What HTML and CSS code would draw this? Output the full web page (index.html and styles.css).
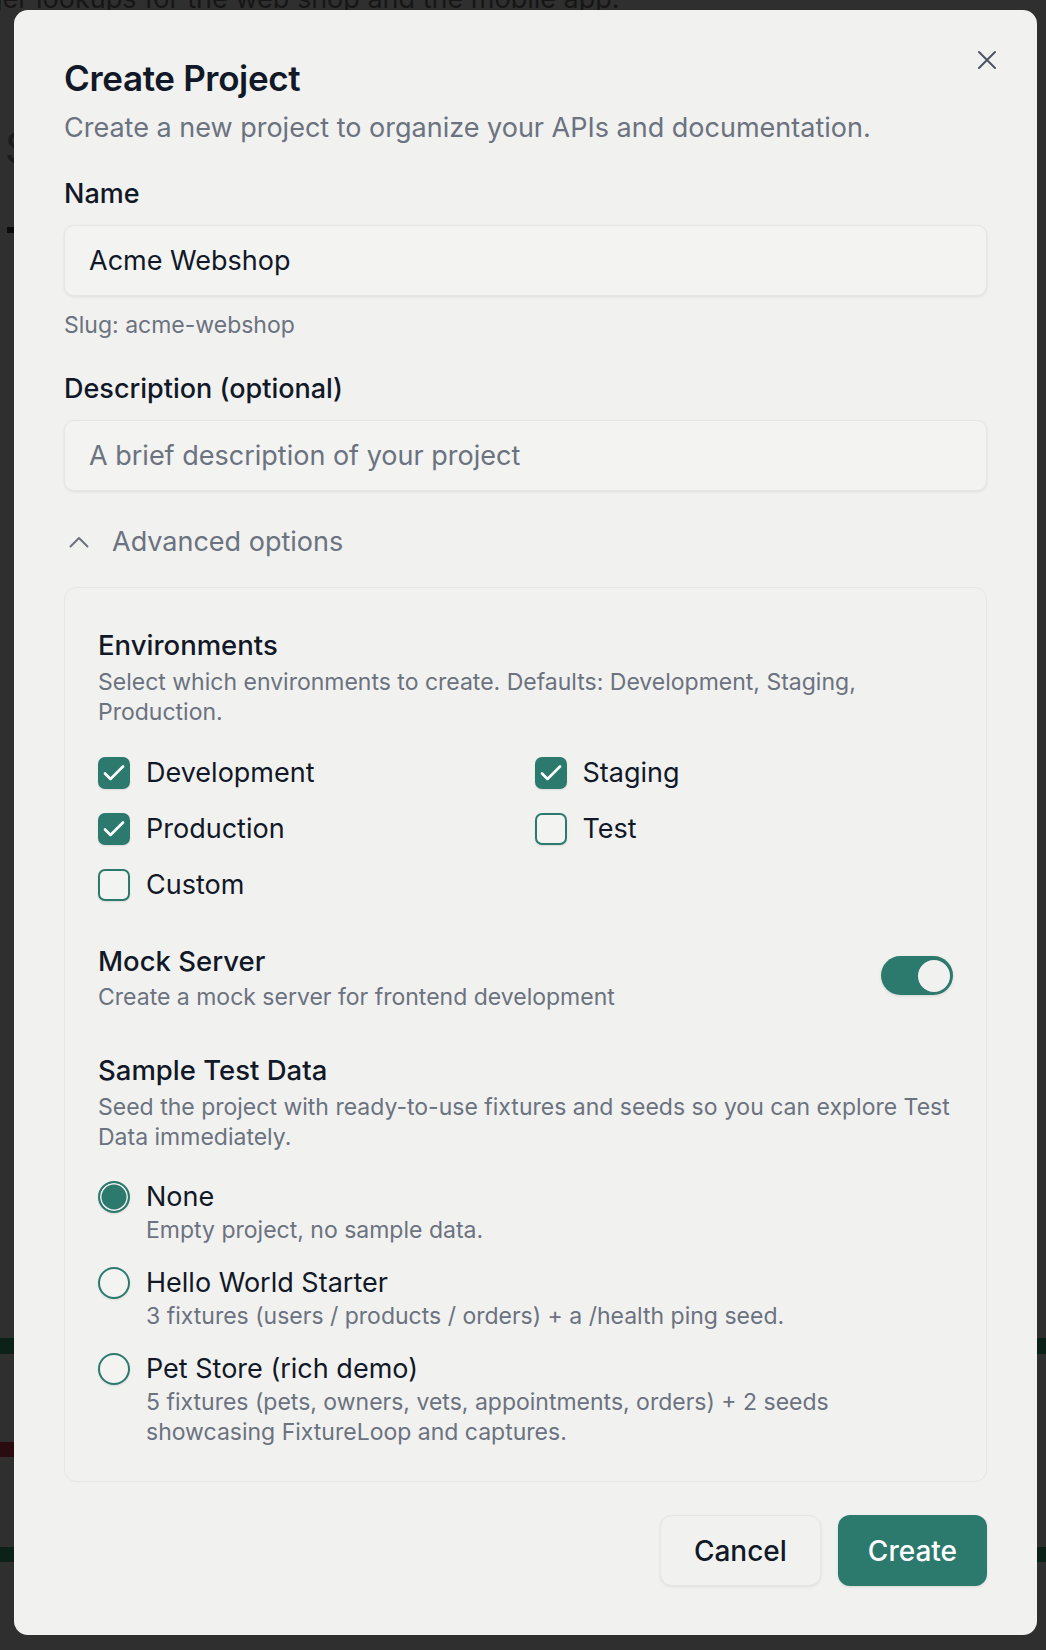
FILE: index.html
```html
<!DOCTYPE html>
<html lang="en">
<head>
    <meta charset="UTF-8">
    <meta name="viewport" content="width=device-width, initial-scale=1.0">
    <title>Create Project</title>
    <link rel="stylesheet" href="styles.css">
</head>
<body>

    <!-- page behind the dialog -->
    <div class="page">
        <p class="page-intro">ger lookups for the web shop and the mobile app.</p>
        <p class="page-heading">S</p>
        <span class="page-bullet"></span>
        <div class="page-band band-green"></div>
        <div class="page-band band-red"></div>
        <div class="page-band band-green band-last"></div>
    </div>

    <div class="dialog" role="dialog" aria-labelledby="dialogTitle">
        <button class="dialog-close" aria-label="Close">
            <svg width="20" height="20" viewBox="0 0 20 20" fill="none" stroke="currentColor" stroke-width="2" stroke-linecap="round">
                <path d="M2 2 18 18M18 2 2 18"/>
            </svg>
        </button>

        <h2 id="dialogTitle" class="dialog-title">Create Project</h2>
        <p class="dialog-desc">Create a new project to organize your APIs and documentation.</p>

        <div class="field">
            <label for="projectName">Name</label>
            <input type="text" id="projectName" value="Acme Webshop">
            <p class="hint">Slug: acme-webshop</p>
        </div>

        <div class="field field-desc">
            <label for="projectDesc">Description (optional)</label>
            <input type="text" id="projectDesc" placeholder="A brief description of your project">
        </div>

        <button class="advanced-toggle">
            <svg width="20" height="12" viewBox="0 0 20 12" fill="none" stroke="currentColor" stroke-width="2" stroke-linecap="round" stroke-linejoin="round">
                <polyline points="1.5,10.5 10,2 18.5,10.5"/>
            </svg>
            Advanced options
        </button>

        <div class="advanced">
            <section class="adv-section">
                <h3>Environments</h3>
                <p class="adv-desc">Select which environments to create. Defaults: Development, Staging, Production.</p>
                <div class="env-grid">
                    <label class="option"><span class="check checked"><svg width="32" height="32" viewBox="0 0 32 32" fill="none" stroke="#fff" stroke-width="2.6" stroke-linecap="round" stroke-linejoin="round"><polyline points="7,16.5 12.5,22 25,9.5"/></svg></span>Development</label>
                    <label class="option"><span class="check checked"><svg width="32" height="32" viewBox="0 0 32 32" fill="none" stroke="#fff" stroke-width="2.6" stroke-linecap="round" stroke-linejoin="round"><polyline points="7,16.5 12.5,22 25,9.5"/></svg></span>Staging</label>
                    <label class="option"><span class="check checked"><svg width="32" height="32" viewBox="0 0 32 32" fill="none" stroke="#fff" stroke-width="2.6" stroke-linecap="round" stroke-linejoin="round"><polyline points="7,16.5 12.5,22 25,9.5"/></svg></span>Production</label>
                    <label class="option"><span class="check"></span>Test</label>
                    <label class="option"><span class="check"></span>Custom</label>
                </div>
            </section>

            <section class="adv-section adv-row">
                <div>
                    <h3>Mock Server</h3>
                    <p class="adv-desc">Create a mock server for frontend development</p>
                </div>
                <span class="switch on"><span class="switch-knob"></span></span>
            </section>

            <section class="adv-section">
                <h3>Sample Test Data</h3>
                <p class="adv-desc">Seed the project with ready-to-use fixtures and seeds so you can explore Test Data immediately.</p>
                <div class="radio-list">
                    <div class="radio-item">
                        <span class="radio checked"></span>
                        <div>
                            <p class="radio-label">None</p>
                            <p class="radio-desc">Empty project, no sample data.</p>
                        </div>
                    </div>
                    <div class="radio-item">
                        <span class="radio"></span>
                        <div>
                            <p class="radio-label">Hello World Starter</p>
                            <p class="radio-desc">3 fixtures (users / products / orders) + a /health ping seed.</p>
                        </div>
                    </div>
                    <div class="radio-item">
                        <span class="radio"></span>
                        <div>
                            <p class="radio-label">Pet Store (rich demo)</p>
                            <p class="radio-desc">5 fixtures (pets, owners, vets, appointments, orders) + 2 seeds showcasing FixtureLoop and captures.</p>
                        </div>
                    </div>
                </div>
            </section>
        </div>

        <div class="dialog-footer">
            <button class="btn btn-outline">Cancel</button>
            <button class="btn btn-primary">Create</button>
        </div>
    </div>

</body>
</html>
```

FILE: styles.css
```css
body {
    margin: 0;
    background-color: #2f2f2f;
    font-family: Inter, "Noto Sans", sans-serif;
    overflow: hidden;
}
p, h2, h3 {
    margin: 0;
}

/* page behind the overlay */
.page-intro {
    margin: -16px 0 0 -14px;
    font-size: 27px;
    line-height: 30px;
    color: #161616;
    white-space: nowrap;
}
.page-heading {
    margin: 109px 0 0 5px;
    font-size: 42px;
    line-height: 50px;
    color: #1c1c1c;
}
.page-bullet {
    display: block;
    width: 8px;
    height: 6px;
    margin: 54px 0 0 7px;
    background: #0b0b0b;
}
.page-band {
    height: 16px;
    margin-top: 1105px;
    background: #0c2118;
}
.band-red {
    width: 100px;
    height: 15px;
    margin-top: 88px;
    background: #2a0b10;
}
.band-last {
    height: 15px;
    margin-top: 90px;
}

/* dialog */
.dialog {
    position: fixed;
    top: 10px;
    left: 14px;
    width: 1023px;
    box-sizing: border-box;
    padding: 47px 50px 49px 50px;
    background: #f1f1ef;
    border-radius: 14px;
    color: #111827;
}
.dialog-close {
    position: absolute;
    top: 40px;
    right: 40px;
    width: 20px;
    height: 20px;
    padding: 0;
    border: none;
    background: none;
    color: #4b5563;
    cursor: pointer;
}
.dialog-close svg {
    display: block;
}
.dialog-title {
    font-size: 35px;
    line-height: 42px;
    font-weight: 600;
    letter-spacing: -0.01em;
}
.dialog-desc {
    margin-top: 11px;
    font-size: 27px;
    line-height: 36px;
    color: #6b7280;
}
.field {
    margin-top: 30px;
}
.field-desc {
    margin-top: 31px;
}
.field label {
    display: block;
    margin-bottom: 13px;
    font-size: 27px;
    line-height: 36px;
    font-weight: 500;
}
.field input {
    display: block;
    width: 100%;
    height: 71px;
    box-sizing: border-box;
    padding: 0 24px;
    border: 1px solid #e6e6e4;
    border-radius: 10px;
    background: #f3f3f1;
    box-shadow: 0 1px 3px rgba(0, 0, 0, 0.08);
    font-family: inherit;
    font-size: 27px;
    color: #111827;
    outline: none;
}
.field input::placeholder {
    color: #6b7280;
}
.hint {
    margin-top: 14px;
    font-size: 23px;
    line-height: 30px;
    color: #6b7280;
}
.advanced-toggle {
    display: flex;
    align-items: center;
    gap: 23px;
    margin: 33px 0 0 5px;
    padding: 0;
    border: none;
    background: none;
    font-family: inherit;
    font-size: 27px;
    line-height: 36px;
    color: #6b7280;
    cursor: pointer;
}
.advanced-toggle svg {
    display: block;
}
.advanced {
    margin-top: 27px;
    padding: 40px 33px 34px 33px;
    border: 1px solid #e6e6e3;
    border-radius: 12px;
}
.adv-section + .adv-section {
    margin-top: 41px;
}
.adv-section h3 {
    font-size: 27.5px;
    line-height: 34px;
    font-weight: 500;
}
.adv-desc {
    margin-top: 5px;
    font-size: 23px;
    line-height: 30px;
    color: #6b7280;
}
.adv-row {
    display: flex;
    justify-content: space-between;
    align-items: center;
}
.adv-row .adv-desc {
    margin-top: 4px;
}
.adv-row .switch {
    margin-bottom: 5px;
}
.env-grid {
    display: grid;
    grid-template-columns: 1fr 1fr;
    gap: 20px 18px;
    margin-top: 28px;
}
.option {
    display: flex;
    align-items: center;
    gap: 16px;
    font-size: 27px;
    line-height: 36px;
}
.check {
    width: 32px;
    height: 32px;
    box-sizing: border-box;
    border: 2px solid #2c7a6e;
    border-radius: 7px;
    background: #f3f3f1;
    box-shadow: 0 1px 2px rgba(0, 0, 0, 0.1);
}
.check.checked {
    background: #2c7a6e;
}
.check svg {
    display: block;
    margin: -2px;
}
.switch {
    width: 72px;
    height: 39px;
    box-sizing: border-box;
    padding: 3.5px;
    border-radius: 20px;
    background: #2c7a6e;
    box-shadow: 0 1px 3px rgba(0, 0, 0, 0.12);
    display: flex;
    justify-content: flex-end;
}
.switch-knob {
    width: 32px;
    height: 32px;
    border-radius: 50%;
    background: #f1f1ef;
}
.radio-list {
    display: flex;
    flex-direction: column;
    gap: 20px;
    margin-top: 27px;
}
.radio-item {
    display: flex;
    align-items: flex-start;
    gap: 16px;
}
.radio {
    flex: none;
    width: 32px;
    height: 32px;
    margin-top: 2px;
    box-sizing: border-box;
    border: 2px solid #2c7a6e;
    border-radius: 50%;
    background: #f3f3f1;
    box-shadow: 0 1px 2px rgba(0, 0, 0, 0.1);
}
.radio.checked {
    background: #2c7a6e;
    box-shadow: inset 0 0 0 1.5px #f1f1ef, 0 1px 2px rgba(0, 0, 0, 0.1);
}
.radio-label {
    font-size: 27px;
    line-height: 36px;
}
.radio-desc {
    font-size: 23px;
    line-height: 30px;
    color: #6b7280;
}
.dialog-footer {
    display: flex;
    justify-content: flex-end;
    gap: 17px;
    margin-top: 33px;
}
.btn {
    height: 71px;
    padding: 0 33px;
    border-radius: 12px;
    font-family: inherit;
    font-size: 28px;
    font-weight: 500;
    cursor: pointer;
}
.btn-outline {
    border: 1px solid #e6e6e4;
    background: #f1f1ef;
    color: #111827;
    box-shadow: 0 1px 3px rgba(0, 0, 0, 0.08);
}
.btn-primary {
    border: none;
    background: #2c7a6e;
    color: #fff;
    padding: 0 30px;
    box-shadow: 0 1px 3px rgba(0, 0, 0, 0.1);
}
```
